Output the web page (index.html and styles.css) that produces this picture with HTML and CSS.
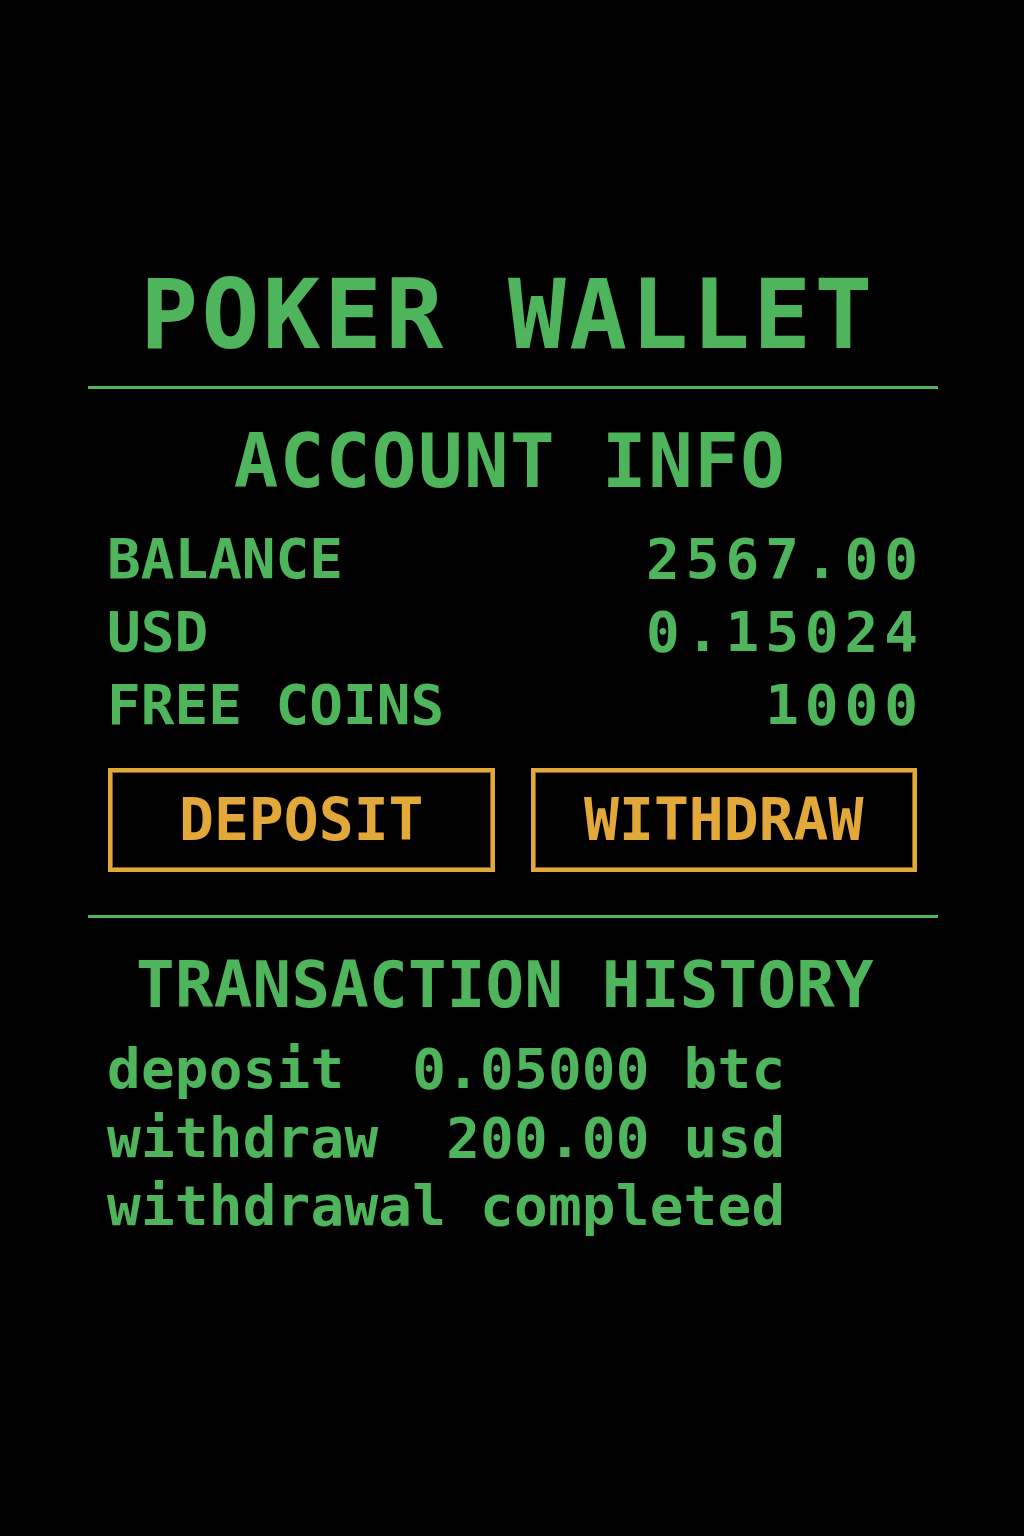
FILE: index.html
```html
<!DOCTYPE html>
<html lang="en">
<head>
<meta charset="utf-8">
<title>Poker Wallet</title>
<link rel="stylesheet" href="styles.css">
</head>
<body>
<main class="wallet">
  <h1 class="title">POKER WALLET</h1>
  <hr class="rule">
  <h2 class="section">ACCOUNT INFO</h2>
  <div class="rows">
    <div class="row"><span>BALANCE</span><span class="value">2567.00</span></div>
    <div class="row"><span>USD</span><span class="value">0.15024</span></div>
    <div class="row"><span>FREE COINS</span><span class="value">1000</span></div>
  </div>
  <div class="actions">
    <button class="btn">DEPOSIT</button>
    <button class="btn">WITHDRAW</button>
  </div>
  <hr class="rule rule-2">
  <h2 class="section history-title">TRANSACTION HISTORY</h2>
  <div class="history">
    <div class="entry">deposit  0.05000 btc</div>
    <div class="entry">withdraw  200.00 usd</div>
    <div class="entry">withdrawal completed</div>
  </div>
</main>
</body>
</html>
```
FILE: styles.css
```css
html, body {
  margin: 0;
  padding: 0;
  background: #000;
}
body {
  width: 1024px;
  height: 1536px;
  font-family: "DejaVu Sans Mono", "Liberation Mono", monospace;
  color: #4fb55c;
}
.wallet {
  width: 850px;
  margin-left: 88px;
  padding-top: 267px;
}
.title {
  margin: 0;
  font-size: 96px;
  line-height: 96px;
  font-weight: bold;
  letter-spacing: 3.5px;
  text-align: center;
  padding-right: 10px;
}
.rule {
  border: 0;
  height: 3px;
  background: #4fb55c;
  margin: 23px 0 0 0;
}
.section {
  margin: 35px 0 0 0;
  font-size: 74px;
  line-height: 74px;
  font-weight: bold;
  letter-spacing: 1.5px;
  text-align: center;
  padding-right: 6px;
}
.rows {
  margin: 24px 20px 0 19px;
}
.row {
  display: flex;
  justify-content: space-between;
  font-size: 56px;
  line-height: 73px;
  font-weight: bold;
  white-space: pre;
}
.value {
  letter-spacing: 6px;
  margin-right: -6px;
}
.actions {
  display: flex;
  gap: 36px;
  margin: 27px 21px 0 20px;
}
.btn {
  flex: 1;
  height: 104px;
  background: #000;
  border: 4px solid #e2a83a;
  box-shadow: inset 0 0 0 1px #8a6420;
  color: #e2a83a;
  font-family: "DejaVu Sans Mono", "Liberation Mono", monospace;
  font-weight: bold;
  font-size: 58px;
  padding: 0;
  text-align: center;
}
.rule-2 {
  margin-top: 43px;
}
.history-title {
  margin-top: 35px;
  font-size: 64px;
  line-height: 64px;
  letter-spacing: 0.3px;
  padding-right: 16px;
}
.history {
  margin: 18px 0 0 19px;
}
.entry {
  font-size: 56px;
  line-height: 68.5px;
  font-weight: bold;
  letter-spacing: 0.2px;
  white-space: pre;
}
```
